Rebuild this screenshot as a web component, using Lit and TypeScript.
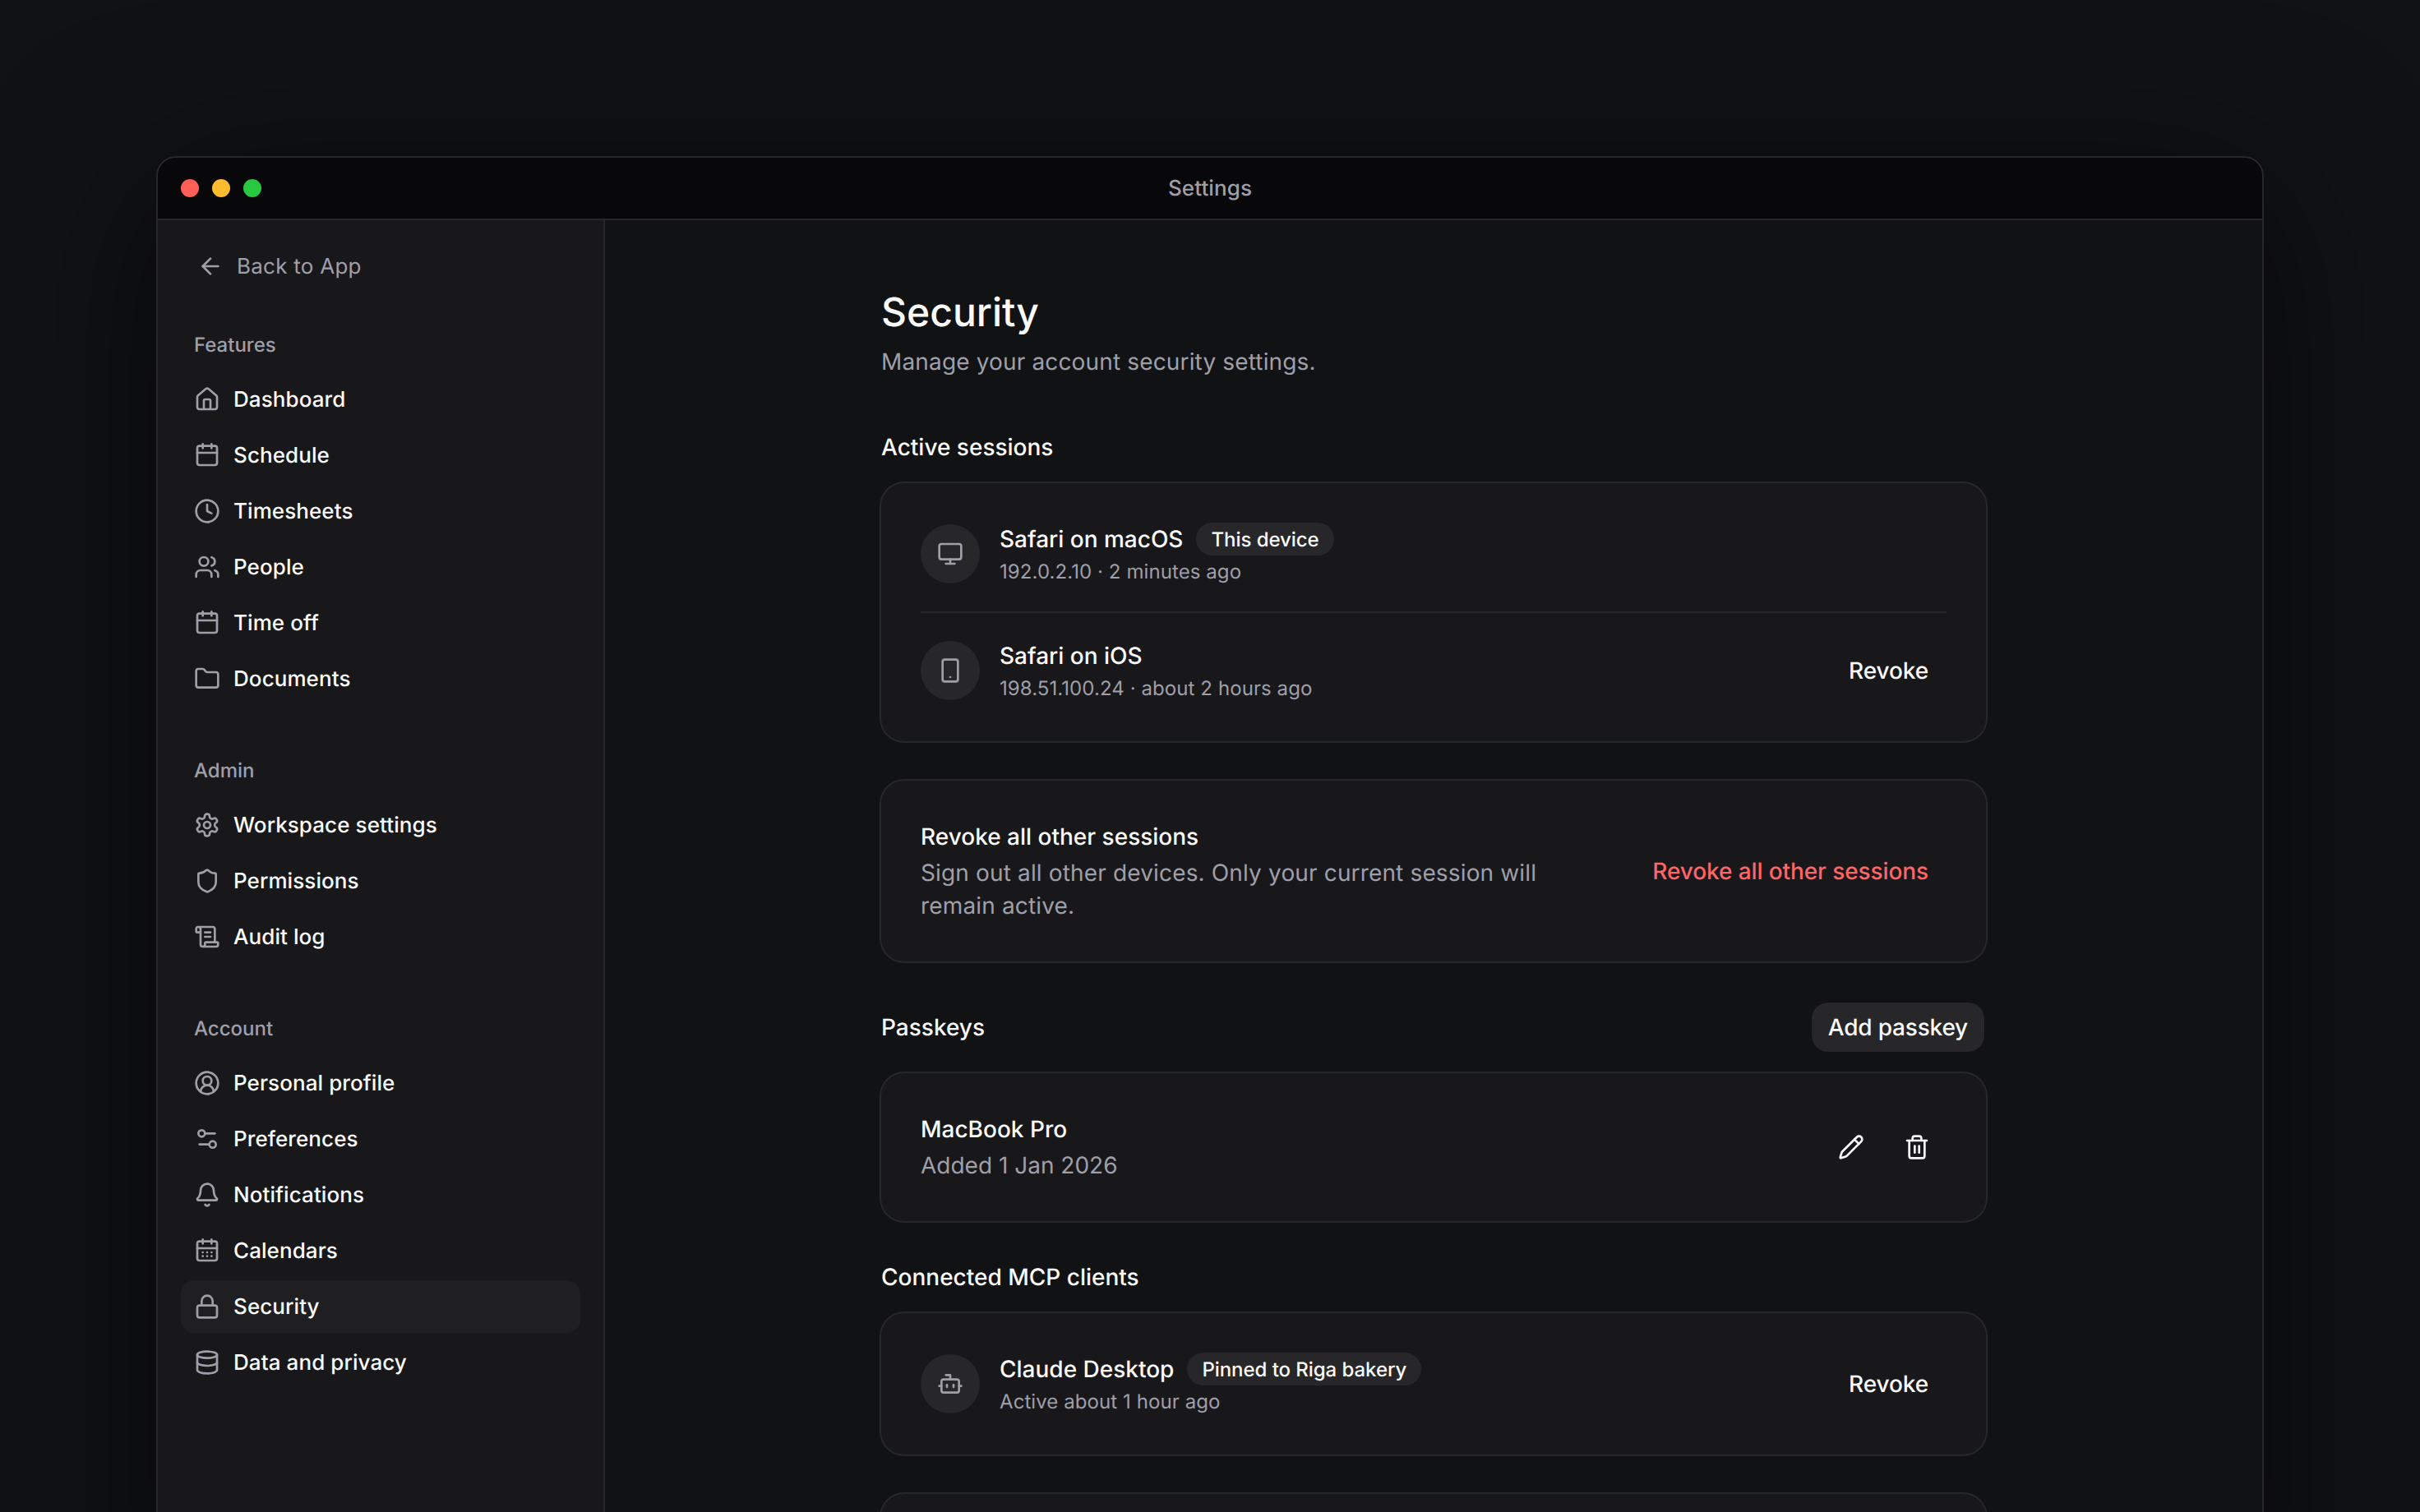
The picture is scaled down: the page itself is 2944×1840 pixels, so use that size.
import { LitElement, html, css, svg, SVGTemplateResult } from "lit";
import { customElement } from "lit/decorators.js";

const I: Record<string, SVGTemplateResult> = {
  back: svg`<path d="m12 19-7-7 7-7"/><path d="M19 12H5"/>`,
  house: svg`<path d="M15 21v-8a1 1 0 0 0-1-1h-4a1 1 0 0 0-1 1v8"/><path d="M3 10a2 2 0 0 1 .709-1.528l7-5.999a2 2 0 0 1 2.582 0l7 5.999A2 2 0 0 1 21 10v9a2 2 0 0 1-2 2H5a2 2 0 0 1-2-2z"/>`,
  calendar: svg`<path d="M8 1.8v3.7"/><path d="M16 1.8v3.7"/><rect x="3" y="3.5" width="18" height="17.5" rx="2"/><path d="M3 9.75h18"/>`,
  clock: svg`<circle cx="12" cy="12" r="10"/><path d="M12 6v6l4 2"/>`,
  users: svg`<path d="M16 21v-2a4 4 0 0 0-4-4H6a4 4 0 0 0-4 4v2"/><circle cx="9" cy="7" r="4"/><path d="M22 21v-2a4 4 0 0 0-3-3.87"/><path d="M16 3.13a4 4 0 0 1 0 7.75"/>`,
  folder: svg`<path d="M20 20a2 2 0 0 0 2-2V8a2 2 0 0 0-2-2h-7.9a2 2 0 0 1-1.69-.9L9.6 3.9A2 2 0 0 0 7.93 3H4a2 2 0 0 0-2 2v13a2 2 0 0 0 2 2Z"/>`,
  gear: svg`<path d="M12.22 2h-.44a2 2 0 0 0-2 2v.18a2 2 0 0 1-1 1.73l-.43.25a2 2 0 0 1-2 0l-.15-.08a2 2 0 0 0-2.73.73l-.22.38a2 2 0 0 0 .73 2.73l.15.1a2 2 0 0 1 1 1.72v.51a2 2 0 0 1-1 1.74l-.15.09a2 2 0 0 0-.73 2.73l.22.38a2 2 0 0 0 2.73.73l.15-.08a2 2 0 0 1 2 0l.43.25a2 2 0 0 1 1 1.73V20a2 2 0 0 0 2 2h.44a2 2 0 0 0 2-2v-.18a2 2 0 0 1 1-1.73l.43-.25a2 2 0 0 1 2 0l.15.08a2 2 0 0 0 2.73-.73l.22-.39a2 2 0 0 0-.73-2.73l-.15-.08a2 2 0 0 1-1-1.74v-.5a2 2 0 0 1 1-1.74l.15-.09a2 2 0 0 0 .73-2.73l-.22-.38a2 2 0 0 0-2.73-.73l-.15.08a2 2 0 0 1-2 0l-.43-.25a2 2 0 0 1-1-1.73V4a2 2 0 0 0-2-2z"/><circle cx="12" cy="12" r="3"/>`,
  shield: svg`<path d="M20 13c0 5-3.5 7.5-7.66 8.95a1 1 0 0 1-.67-.01C7.5 20.5 4 18 4 13V6a1 1 0 0 1 1-1c2 0 4.5-1.2 6.24-2.72a1.17 1.17 0 0 1 1.52 0C14.51 3.81 17 5 19 5a1 1 0 0 1 1 1z"/>`,
  scroll: svg`<path d="M15 12h-5"/><path d="M15 8h-5"/><path d="M19 17V5a2 2 0 0 0-2-2H4"/><path d="M8 21h12a2 2 0 0 0 2-2v-1a1 1 0 0 0-1-1H11a1 1 0 0 0-1 1v1a2 2 0 1 1-4 0V5a2 2 0 1 0-4 0v2a1 1 0 0 0 1 1h3"/>`,
  user: svg`<path d="M18 20a6 6 0 0 0-12 0"/><circle cx="12" cy="10" r="4"/><circle cx="12" cy="12" r="10"/>`,
  sliders: svg`<path d="M14 17H5"/><path d="M19 7h-9"/><circle cx="17" cy="17" r="3"/><circle cx="7" cy="7" r="3"/>`,
  bell: svg`<path d="M10.268 21a2 2 0 0 0 3.464 0"/><path d="M3.262 15.326A1 1 0 0 0 4 17h16a1 1 0 0 0 .74-1.673C19.41 13.956 18 12.499 18 8A6 6 0 0 0 6 8c0 4.499-1.411 5.956-2.738 7.326"/>`,
  days: svg`<path d="M8 1.8v3.7"/><path d="M16 1.8v3.7"/><rect x="3" y="3.5" width="18" height="17.5" rx="2"/><path d="M3 9.75h18"/><path d="M8 13.5h.01"/><path d="M12 13.5h.01"/><path d="M16 13.5h.01"/><path d="M8 17h.01"/><path d="M12 17h.01"/><path d="M16 17h.01"/>`,
  lock: svg`<rect x="3" y="11" width="18" height="11" rx="2"/><path d="M7 11V7a5 5 0 0 1 10 0v4"/>`,
  db: svg`<ellipse cx="12" cy="5" rx="9" ry="3"/><path d="M3 5V19A9 3 0 0 0 21 19V5"/><path d="M3 12A9 3 0 0 0 21 12"/>`,
  monitor: svg`<rect x="2" y="3" width="20" height="14" rx="2"/><path d="M12 17v4"/><path d="M8 21h8"/>`,
  tablet: svg`<rect x="5" y="2" width="14" height="20" rx="2"/><path d="M12 18h.01"/>`,
  bot: svg`<path d="M12 8V4H8"/><rect x="4" y="8" width="16" height="12" rx="2"/><path d="M2 14h2"/><path d="M20 14h2"/><path d="M15 13v2"/><path d="M9 13v2"/>`,
  pencil: svg`<path d="M21.174 6.812a1 1 0 0 0-3.986-3.987L3.842 16.174a2 2 0 0 0-.5.83l-1.321 4.352a.5.5 0 0 0 .623.622l4.353-1.32a2 2 0 0 0 .83-.497z"/><path d="m15 5 4 4"/>`,
  trash: svg`<path d="M10 11v6"/><path d="M14 11v6"/><path d="M19 6v14a2 2 0 0 1-2 2H7a2 2 0 0 1-2-2V6"/><path d="M3 6h18"/><path d="M8 6V4a2 2 0 0 1 2-2h4a2 2 0 0 1 2 2v2"/>`,
};

const icon = (n: string) =>
  html`<svg class="ic" viewBox="0 0 24 24" fill="none" stroke="currentColor" stroke-width="2" stroke-linecap="round" stroke-linejoin="round">${I[n]}</svg>`;

const NAV = [
  { label: "Features", items: [["house", "Dashboard"], ["calendar", "Schedule"], ["clock", "Timesheets"], ["users", "People"], ["calendar", "Time off"], ["folder", "Documents"]] },
  { label: "Admin", items: [["gear", "Workspace settings"], ["shield", "Permissions"], ["scroll", "Audit log"]] },
  { label: "Account", items: [["user", "Personal profile"], ["sliders", "Preferences"], ["bell", "Notifications"], ["days", "Calendars"], ["lock", "Security"], ["db", "Data and privacy"]] },
];

@customElement("app-root")
export class AppRoot extends LitElement {
  static styles = css`
    :host { display: block; }
    * { box-sizing: border-box; }
    .page { height: 1840px; overflow: hidden; background: #111214; padding: 190px 190px 0; font-family: Inter, "Liberation Sans", sans-serif; color: #fafafa; text-rendering: geometricPrecision; }
    .window { height: 1800px; display: flex; flex-direction: column; background: #111214; border: 2px solid #27272a; border-radius: 24px; overflow: hidden; box-shadow: 0 40px 200px rgba(0,0,0,.6); }
    .bar { position: relative; flex: none; height: 76px; background: #08080a; border-bottom: 2px solid #27272a; display: flex; align-items: center; justify-content: center; }
    .dots { position: absolute; left: 28px; top: 26px; display: flex; gap: 16px; }
    .dot { width: 22px; height: 22px; border-radius: 50%; }
    .red { background: #ff5f57; } .yellow { background: #febc2e; } .green { background: #28c840; }
    .title { font-size: 26px; font-weight: 500; letter-spacing: .1px; color: #9f9fa9; line-height: 41px; }
    .body { flex: 1; display: flex; min-height: 0; }
    .side { flex: none; width: 544px; background: #18181b; border-right: 2px solid #27272a; padding: 24px 28px; }
    .back { height: 64px; display: flex; align-items: center; gap: 16px; padding-left: 20px; font-size: 26px; letter-spacing: .25px; color: #9f9fa9; }
    .group { margin-top: 48px; }
    .group + .group { margin-top: 64px; }
    .glabel { height: 32px; line-height: 32px; padding-left: 16px; font-size: 24px; font-weight: 500; color: #9f9fa9; margin-bottom: 18px; }
    .items { display: flex; flex-direction: column; gap: 4px; }
    .item { height: 64px; display: flex; align-items: center; gap: 16px; padding: 0 16px; border-radius: 16px; font-size: 26px; letter-spacing: .08px; font-weight: 500; color: #fafafa; }
    .item.active { background: #1f1f22; }
    .item .ic, .back .ic { color: #9f9fa9; }
    .ic { width: 32px; height: 32px; flex: none; display: block; }
    .main { flex: 1; min-width: 0; display: flex; justify-content: center; }
    .content { width: 1344px; padding-top: 80px; }
    h1 { margin: 0; font-size: 48px; line-height: 64px; font-weight: 500; }
    .sub { margin: 8px 0 0; font-size: 28px; letter-spacing: .15px; line-height: 40px; color: #9f9fa9; }
    h2 { margin: 0; font-size: 28px; line-height: 40px; font-weight: 500; }
    .sec { margin-top: 64px; margin-bottom: 24px; }
    .sec.next { margin-top: 48px; }
    .sechead { display: flex; align-items: center; justify-content: space-between; height: 64px; margin: 48px 0 24px; padding-right: 2px; }
    .add { height: 60px; display: flex; align-items: center; padding: 0 20px; background: #27272a; border-radius: 20px; font-size: 28px; letter-spacing: -.2px; font-weight: 500; }
    .card { background: #18181b; border-radius: 28px; box-shadow: 0 0 0 2px #27272a; padding: 48px; }
    .card + .card { margin-top: 48px; }
    .stub { height: 172px; }
    .row { display: flex; align-items: center; gap: 24px; }
    .row.split { padding-bottom: 32px; border-bottom: 2px solid #27272a; margin-bottom: 32px; }
    .avatar { flex: none; width: 72px; height: 72px; border-radius: 50%; background: #27272a; color: #9f9fa9; display: flex; align-items: center; justify-content: center; }
    .info { flex: 1; min-width: 0; }
    .nameline { display: flex; align-items: center; gap: 16px; height: 40px; }
    .name { font-size: 28px; font-weight: 500; line-height: 40px; }
    .pill { height: 40px; padding: 0 18px; display: flex; align-items: center; border-radius: 20px; background: #27272a; font-size: 24px; letter-spacing: -.06px; font-weight: 500; }
    .meta { font-size: 24px; letter-spacing: .08px; height: 36px; line-height: 40px; color: #9f9fa9; }
    .ghost { flex: none; padding: 0 22px 0 24px; font-size: 28px; letter-spacing: -.1px; font-weight: 500; line-height: 40px; }
    .danger { color: #ff6467; }
    .between { display: flex; align-items: center; justify-content: space-between; gap: 32px; }
    .ctitle { font-size: 28px; line-height: 40px; font-weight: 500; }
    .cdesc { margin-top: 4px; font-size: 28px; line-height: 40px; color: #9f9fa9; max-width: 820px; }
    .long { letter-spacing: .15px; }
    .acts { display: flex; gap: 8px; }
    .iconbtn { width: 72px; height: 72px; display: flex; align-items: center; justify-content: center; color: #fafafa; }
  `;

  session(ic: string, name: string, meta: string, pill?: string, action = true, cls = "") {
    return html`<div class="row ${cls}">
      <div class="avatar">${icon(ic)}</div>
      <div class="info">
        <div class="nameline"><span class="name">${name}</span>${pill ? html`<span class="pill">${pill}</span>` : ""}</div>
        <div class="meta">${meta}</div>
      </div>
      ${action ? html`<div class="ghost">Revoke</div>` : ""}
    </div>`;
  }

  render() {
    return html`<div class="page"><div class="window">
      <div class="bar"><div class="dots"><span class="dot red"></span><span class="dot yellow"></span><span class="dot green"></span></div><span class="title">Settings</span></div>
      <div class="body">
        <aside class="side">
          <div class="back">${icon("back")}<span>Back to App</span></div>
          ${NAV.map((g) => html`<div class="group">
            <div class="glabel">${g.label}</div>
            <div class="items">${g.items.map(([ic, t]) => html`<div class="item ${t === "Security" ? "active" : ""}">${icon(ic)}<span>${t}</span></div>`)}</div>
          </div>`)}
        </aside>
        <main class="main"><div class="content">
          <h1>Security</h1>
          <p class="sub">Manage your account security settings.</p>
          <h2 class="sec">Active sessions</h2>
          <div class="card">
            ${this.session("monitor", "Safari on macOS", "192.0.2.10 · 2 minutes ago", "This device", false, "split")}
            ${this.session("tablet", "Safari on iOS", "198.51.100.24 · about 2 hours ago")}
          </div>
          <div class="card between">
            <div><div class="ctitle">Revoke all other sessions</div><div class="cdesc long">Sign out all other devices. Only your current session will remain active.</div></div>
            <div class="ghost danger">Revoke all other sessions</div>
          </div>
          <div class="sechead"><h2>Passkeys</h2><div class="add">Add passkey</div></div>
          <div class="card between">
            <div><div class="ctitle">MacBook Pro</div><div class="cdesc">Added 1 Jan 2026</div></div>
            <div class="acts"><div class="iconbtn">${icon("pencil")}</div><div class="iconbtn">${icon("trash")}</div></div>
          </div>
          <h2 class="sec next">Connected MCP clients</h2>
          <div class="card">${this.session("bot", "Claude Desktop", "Active about 1 hour ago", "Pinned to Riga bakery")}</div>
          <div class="card stub"></div>
        </div></main>
      </div>
    </div></div>`;
  }
}
